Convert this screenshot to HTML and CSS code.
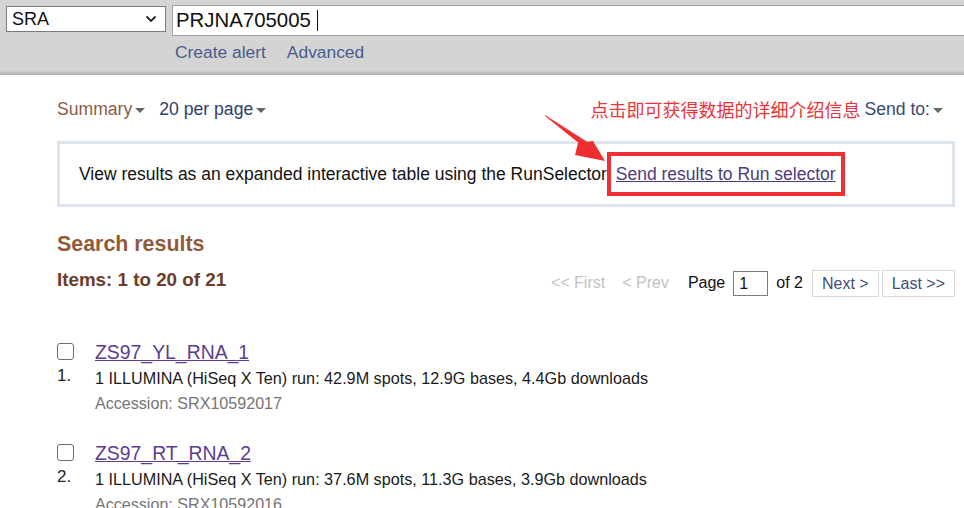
FILE: index.html
```html
<!DOCTYPE html>
<html lang="en">
<head>
<meta charset="utf-8">
<link rel="stylesheet" href="styles.css">
</head>
<body>
<header class="header">
  <div class="search-row">
    <div class="db-select"><span>SRA</span>
      <svg class="chev" width="12" height="8" viewBox="0 0 12 8"><path d="M1.5 1.5 L6 6 L10.5 1.5" fill="none" stroke="#222" stroke-width="1.8"/></svg>
    </div>
    <div class="term"><span>PRJNA705005</span><span class="cursor"></span></div>
  </div>
  <div class="header-links">
    <a class="hlink">Create alert</a>
    <a class="hlink">Advanced</a>
  </div>
</header>

<main class="main">
  <div class="toolbar">
    <div class="tb-left">
      <span class="summary">Summary<i class="caret"></i></span>
      <span class="perpage">20 per page<i class="caret"></i></span>
    </div>
    <div class="tb-right">
      <span class="note">点击即可获得数据的详细介绍信息</span>
      <span class="sendto">Send to:<i class="caret"></i></span>
    </div>
  </div>

  <svg class="arrow" width="80" height="60" viewBox="0 0 80 60">
    <polygon points="0,0 44,28 40,33 0,1" fill="#ee2f30"/>
    <polygon points="33,28 48,26 60,46 30,40" fill="#ee2f30"/>
  </svg>

  <div class="runbox">
    <span class="runtext">View results as an expanded interactive table using the RunSelector.</span>
    <a class="runlink">Send results to Run selector</a>
  </div>

  <h2 class="results-title">Search results</h2>

  <div class="items-row">
    <div class="items-count">Items: 1 to 20 of 21</div>
    <div class="pager">
      <span class="disabled">&lt;&lt; First</span>
      <span class="disabled">&lt; Prev</span>
      <span class="page-label">Page</span>
      <span class="page-input">1</span>
      <span class="of">of 2</span>
      <span class="pbtn">Next &gt;</span>
      <span class="pbtn">Last &gt;&gt;</span>
    </div>
  </div>

  <ol class="results">
    <li class="rslt">
      <div class="rcol">
        <span class="cb"></span>
        <span class="num">1.</span>
      </div>
      <div class="rbody">
        <a class="rtitle">ZS97_YL_RNA_1</a>
        <div class="desc">1 ILLUMINA (HiSeq X Ten) run: 42.9M spots, 12.9G bases, 4.4Gb downloads</div>
        <div class="acc">Accession: SRX10592017</div>
      </div>
    </li>
    <li class="rslt">
      <div class="rcol">
        <span class="cb"></span>
        <span class="num">2.</span>
      </div>
      <div class="rbody">
        <a class="rtitle">ZS97_RT_RNA_2</a>
        <div class="desc">1 ILLUMINA (HiSeq X Ten) run: 37.6M spots, 11.3G bases, 3.9Gb downloads</div>
        <div class="acc">Accession: SRX10592016</div>
      </div>
    </li>
  </ol>
</main>
</body>
</html>
```

FILE: styles.css
```css
* { box-sizing: border-box; }
html, body { margin: 0; padding: 0; background: #fff; overflow: hidden; }
body {
  font-family: "Liberation Sans", Arial, "Noto Sans CJK SC", sans-serif;
  color: #111;
  position: relative;
  width: 964px;
  height: 508px;
}

.header {
  height: 75px;
  padding-top: 5px;
  background: linear-gradient(to bottom, #d4d4d4 0, #d4d4d4 71px, #c4c4c4 72px, #b0b0b0 75px);
}
.search-row { display: flex; align-items: flex-start; }
.db-select {
  margin: 1px 0 0 6px;
  width: 160px;
  height: 26px;
  background: #fff;
  border: 1px solid #7c7c7c;
  display: flex;
  align-items: center;
  justify-content: space-between;
  padding: 0 5px;
  font-size: 18px;
  color: #111;
}
.chev { margin-right: 3px; }
.term {
  margin-left: 6px;
  flex: 1;
  height: 31px;
  background: #fff;
  border-top: 1px solid #a2a2a2;
  border-bottom: 1px solid #a2a2a2;
  border-left: 1px solid #a2a2a2;
  display: flex;
  align-items: center;
  padding-left: 3px;
  font-size: 20.4px;
  color: #111;
}
.cursor { display: inline-block; width: 1px; height: 21px; background: #111; margin-left: 6px; }
.header-links { display: flex; gap: 21px; padding-left: 175px; margin-top: 6px; }
.hlink { font-size: 17.4px; color: #4a5c8f; }

.main { margin: 0 9px 0 57px; position: relative; }
.toolbar {
  display: flex;
  justify-content: space-between;
  align-items: center;
  height: 20px;
  margin-top: 24px;
  font-size: 17.6px;
}
.tb-left { display: flex; gap: 14px; }
.summary { color: #8c5d48; }
.perpage { color: #2d3e6f; }
.caret {
  display: inline-block;
  width: 0; height: 0;
  border-left: 5px solid transparent;
  border-right: 5px solid transparent;
  border-top: 5px solid #666;
  margin-left: 3px;
  vertical-align: 2px;
}
.tb-right { display: flex; align-items: center; gap: 4px; margin-right: 12px; }
.note { color: #ea3438; font-size: 18px; }
.sendto { color: #3b4a72; }

.arrow { position: absolute; left: 488px; top: 16px; }

.runbox {
  margin-top: 22px;
  height: 66px;
  border: 3px solid #dde4ee;
  display: flex;
  align-items: center;
  padding-left: 19px;
  font-size: 17.5px;
}
.runtext { color: #111; }
.runlink {
  margin-left: 5px;
  color: #4c3a80;
  text-decoration: underline;
  position: relative;
}
.runlink::after {
  content: "";
  position: absolute;
  left: -9px; right: -9px; top: -12px; bottom: -11px;
  border: 4px solid #f03034;
}

.results-title {
  margin: 25px 0 0 0;
  font-size: 21.4px;
  font-weight: bold;
  color: #935a3a;
  line-height: 24px;
}
.items-row {
  display: flex;
  justify-content: space-between;
  align-items: flex-start;
  margin-top: 13px;
  height: 28px;
}
.items-count { font-size: 18.8px; font-weight: bold; color: #6e3b28; line-height: 20px; margin-top: 1px; }
.pager { display: flex; align-items: center; font-size: 16px; height: 28px; }
.disabled { color: #c2c2c2; margin-right: 17px; }
.page-label { color: #111; margin-left: 2px; }
.page-input {
  display: inline-block;
  width: 35px; height: 25px;
  border: 1px solid #7c7c7c;
  margin: 0 8px 0 8px;
  padding-left: 5px;
  line-height: 23px;
  color: #111;
}
.of { color: #111; margin-right: 9px; }
.pbtn {
  display: inline-block;
  border: 1px solid #dadada;
  height: 27px;
  line-height: 25px;
  padding: 0 9px;
  color: #3d4e7c;
  margin-right: 3px;
}
.pbtn:last-child { margin-right: 0; }

.results { list-style: none; margin: 46px 0 0 0; padding: 0; }
.rslt { display: flex; margin-bottom: 32px; }
.rcol { width: 38px; display: flex; flex-direction: column; }
.cb {
  display: block;
  width: 17px; height: 17px;
  border: 1px solid #6d6d6d;
  border-radius: 3px;
}
.num { font-size: 17px; color: #222; margin-top: 6px; line-height: 20px; }
.rbody { display: flex; flex-direction: column; margin-top: -1px; }
.rtitle { font-size: 19.4px; color: #5c3d91; text-decoration: underline; line-height: 20px; }
.desc { font-size: 16.2px; color: #1a1a1a; margin-top: 7px; line-height: 18px; }
.acc { font-size: 16.1px; color: #757575; margin-top: 7px; line-height: 18px; }
```
